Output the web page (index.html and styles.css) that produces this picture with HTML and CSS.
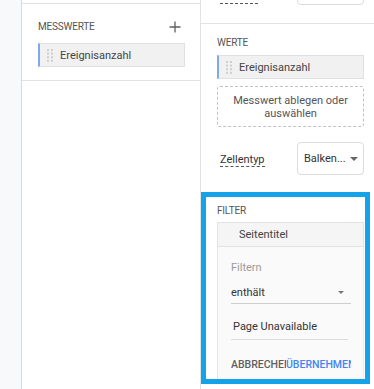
FILE: index.html
```html
<!DOCTYPE html>
<html lang="de">
  <head>
    <meta charset="UTF-8" />
    <title>Tabelle bearbeiten</title>
    <link rel="stylesheet" href="styles.css">
  </head>
  <body>
    <div class="editor">
      <div class="rail"></div>

      <div class="col-left">
        <div class="cut"></div>
        <div class="section">
          <div class="section-head">
            <span class="title">Messwerte</span>
            <svg class="plus" width="12" height="12" viewBox="0 0 12 12">
              <path d="M6 0.5v11M0.5 6h11" stroke="#5f5f5f" stroke-width="1.3" fill="none" />
            </svg>
          </div>
          <div class="chip">
            <svg class="handle" width="6" height="13" viewBox="0 0 6 13">
              <rect x="0" y="0" width="2" height="2" /><rect x="4" y="0" width="2" height="2" />
              <rect x="0" y="3.6" width="2" height="2" /><rect x="4" y="3.6" width="2" height="2" />
              <rect x="0" y="7.2" width="2" height="2" /><rect x="4" y="7.2" width="2" height="2" />
              <rect x="0" y="10.8" width="2" height="2" /><rect x="4" y="10.8" width="2" height="2" />
            </svg>
            <span>Ereignisanzahl</span>
          </div>
        </div>
      </div>
      <!-- .col-left -->

      <div class="col-right">
        <div class="peek">
          <span class="peek-label"></span>
          <div class="select peek-select"></div>
        </div>

        <div class="values">
          <div class="title">Werte</div>
          <div class="chip">
            <svg class="handle" width="6" height="13" viewBox="0 0 6 13">
              <rect x="0" y="0" width="2" height="2" /><rect x="4" y="0" width="2" height="2" />
              <rect x="0" y="3.6" width="2" height="2" /><rect x="4" y="3.6" width="2" height="2" />
              <rect x="0" y="7.2" width="2" height="2" /><rect x="4" y="7.2" width="2" height="2" />
              <rect x="0" y="10.8" width="2" height="2" /><rect x="4" y="10.8" width="2" height="2" />
            </svg>
            <span>Ereignisanzahl</span>
          </div>
          <div class="dropzone">Messwert ablegen oder<br />auswählen</div>
          <div class="cell-row">
            <span class="dashed-label">Zellentyp</span>
            <div class="select">
              <span>Balken...</span>
              <span class="caret"></span>
            </div>
          </div>
        </div>

        <div class="filter">
          <div class="title">Filter</div>
          <div class="dimension">Seitentitel</div>
          <div class="filter-panel">
            <div class="muted">Filtern</div>
            <div class="match">
              <span>enthält</span>
              <span class="caret"></span>
            </div>
            <div class="value">Page Unavailable</div>
            <div class="actions">
              <span class="btn btn-cancel">Abbrechen</span>
              <span class="btn btn-apply">Übernehmen</span>
            </div>
          </div>
        </div>
        <!-- .filter -->
      </div>
      <!-- .col-right -->
    </div>
  </body>
</html>
```

FILE: styles.css
```css
*,
*::before,
*::after {
  box-sizing: border-box;
  padding: 0;
  margin: 0;
}

body {
  width: 374px;
  height: 389px;
  overflow: hidden;
  background-color: #fff;
  font-family: Roboto, 'Liberation Sans', sans-serif;
  color: #444;
}

.editor {
  display: flex;
  height: 389px;
}

.rail {
  width: 22px;
  flex: none;
  background-color: #f8f9fa;
  border-right: 1px solid #dadada;
}

.col-left {
  width: 179px;
  flex: none;
  border-right: 1px solid #e3e3e3;
}

.col-left .cut {
  height: 4px;
  border-bottom: 1px solid #e3e3e3;
}

.col-left .section {
  padding: 16px 15px 13px 16px;
  border-bottom: 1px solid #e3e3e3;
}

.section-head {
  display: flex;
  align-items: center;
  justify-content: space-between;
  height: 14px;
  padding-right: 4px;
}

.title {
  font-size: 10px;
  line-height: 14px;
  text-transform: uppercase;
  color: #555;
  letter-spacing: -0.2px;
}

.chip {
  display: flex;
  align-items: center;
  height: 24px;
  margin-top: 9px;
  padding-left: 7px;
  background-color: #f1f1f1;
  border: 1px solid #e0e0e0;
  border-left: 2px solid #80a9ea;
  font-size: 11px;
  color: #444;
}

.handle {
  fill: #cfcfcf;
  margin-right: 7px;
}

.col-right {
  flex: 1;
}

.peek {
  display: flex;
  align-items: flex-end;
  justify-content: space-between;
  height: 24px;
  padding: 0 10px 18px 19px;
  border-bottom: 1px solid #e3e3e3;
}

.peek-label {
  width: 38px;
  height: 2px;
  margin-bottom: 1px;
  border-bottom: 1px dashed #555;
}

.dashed-label {
  font-size: 11px;
  line-height: 13px;
  color: #333;
  border-bottom: 1px dashed #555;
}

.select {
  display: flex;
  align-items: center;
  gap: 4px;
  width: 67px;
  height: 33px;
  padding: 0 6px 0 6px;
  border: 1px solid #dadce0;
  border-radius: 4px;
  font-size: 11px;
  color: #333;
}

.peek-select {
  height: 30px;
}

.caret {
  width: 0;
  height: 0;
  border-left: 4px solid transparent;
  border-right: 4px solid transparent;
  border-top: 4px solid #666;
}

.values {
  padding: 12px 10px 0 16px;
}

.values .chip {
  margin-top: 5px;
}

.dropzone {
  height: 41px;
  margin-top: 7px;
  padding-top: 7px;
  border: 1px dashed #c2c2c2;
  border-radius: 3px;
  text-align: center;
  font-size: 11px;
  line-height: 13px;
  color: #555;
}

.cell-row {
  display: flex;
  align-items: center;
  justify-content: space-between;
  margin-top: 15px;
  padding-left: 3px;
}

.cell-row .dashed-label {
  margin-top: 2px;
}

.filter {
  height: 192px;
  margin: 17px 4px 0 0;
  padding: 7px 1px 0 11px;
  border: 5px solid #14a2e8;
  display: flex;
  flex-direction: column;
}

.dimension {
  height: 25px;
  margin-top: 4px;
  padding-left: 21px;
  line-height: 24px;
  font-size: 11px;
  color: #444;
  background-color: #f5f5f5;
  border: 1px solid #e3e3e3;
}

.filter-panel {
  flex: 1;
  padding: 14px 0 0 13px;
  background-color: #fafafa;
  border-left: 1px solid #e6e6e6;
  border-right: 1px solid #ececec;
}

.muted {
  font-size: 11px;
  line-height: 14px;
  color: #9a9a9a;
}

.match {
  display: flex;
  align-items: center;
  justify-content: space-between;
  width: 120px;
  height: 22px;
  margin-top: 7px;
  padding: 0 7px 1px 0;
  border-bottom: 1px solid #cfcfcf;
  font-size: 11px;
  color: #333;
}

.match .caret {
  border-left-width: 3px;
  border-right-width: 3px;
  border-top: 3px solid #777;
}

.value {
  width: 117px;
  height: 24px;
  margin-top: 12px;
  padding-left: 2px;
  line-height: 22px;
  border-bottom: 1px solid #dcdcdc;
  font-size: 11px;
  color: #333;
}

.actions {
  display: flex;
  margin-top: 18px;
}

.btn {
  overflow: hidden;
  white-space: nowrap;
  font-size: 10.5px;
  line-height: 14px;
  font-weight: 500;
  text-transform: uppercase;
}

.btn-cancel {
  width: 55px;
  color: #5f5f5f;
}

.btn-apply {
  width: 65px;
  color: #4285f4;
}
```
